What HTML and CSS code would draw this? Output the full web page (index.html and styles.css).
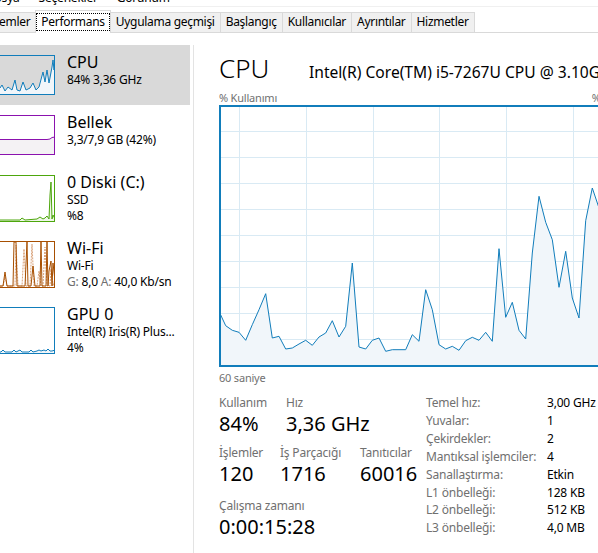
FILE: index.html
```
<!DOCTYPE html>
<html lang="tr">

<head>
    <meta charset="UTF-8">
    <meta name="viewport" content="width=device-width, initial-scale=1.0">
    <title>Görev Yöneticisi</title>
    <link rel="stylesheet" href="styles.css">
</head>

<body>

    <!-- Menu bar (only the bottom of it is in view) -->
    <div class="menubar">
        <div class="menubar-inner">
            <span class="menu-item first">Dosya</span>
            <span class="menu-item">Seçenekler</span>
            <span class="menu-item">Görünüm</span>
        </div>
    </div>

    <!-- Tabs -->
    <div class="tabs">
        <div class="tab first">İşlemler</div>
        <div class="tab active"><span class="focus">Performans</span></div>
        <div class="tab">Uygulama geçmişi</div>
        <div class="tab">Başlangıç</div>
        <div class="tab">Kullanıcılar</div>
        <div class="tab">Ayrıntılar</div>
        <div class="tab">Hizmetler</div>
    </div>

    <div class="main">

        <!-- Left list of resources -->
        <div class="sidebar">
            <div class="perf-item selected">
                <svg class="thumb" width="70" height="40" viewBox="0 0 70 40">
                    <polygon class="cpu-fill" points="0,32 4,30 8,34 12,31 15,33 17,30 20,36 23,32 27,35 30,25 32,35 35,36 38,27 41,35 45,33 48,28 51,35 54,32 58,17 60,27 62,15 64,28 67,12 68,5 69,15 70,7 70,40 0,40"></polygon>
                    <polyline class="cpu-line" points="0,32 4,30 8,34 12,31 15,33 17,30 20,36 23,32 27,35 30,25 32,35 35,36 38,27 41,35 45,33 48,28 51,35 54,32 58,17 60,27 62,15 64,28 67,12 68,5 69,15 70,7"></polyline>
                    <rect class="cpu-box" x="0.5" y="0.5" width="69" height="39"></rect>
                </svg>
                <div class="perf-text">
                    <div class="perf-title">CPU</div>
                    <div class="perf-sub">84% 3,36 GHz</div>
                </div>
            </div>

            <div class="perf-item">
                <svg class="thumb" width="70" height="40" viewBox="0 0 70 40">
                    <polygon class="mem-fill" points="0,24.5 62,24.5 65,24 67,22.5 70,22 70,40 0,40"></polygon>
                    <polyline class="mem-line" points="0,24.5 62,24.5 65,24 67,22.5 70,22"></polyline>
                    <rect class="mem-box" x="0.5" y="0.5" width="69" height="39"></rect>
                </svg>
                <div class="perf-text">
                    <div class="perf-title">Bellek</div>
                    <div class="perf-sub">3,3/7,9 GB (42%)</div>
                </div>
            </div>

            <div class="perf-item tall">
                <svg class="thumb" width="70" height="47" viewBox="0 0 70 47">
                    <polygon class="disk-fill" points="0,45 35,45 37,43 40,45 52,44 55,42 58,44 60,43 62,41 64,44 65,20 66,7 67,44 68,40 70,44 70,47 0,47"></polygon>
                    <polyline class="disk-line" points="0,45 35,45 37,43 40,45 52,44 55,42 58,44 60,43 62,41 64,44 65,20 66,7 67,44 68,40 70,44"></polyline>
                    <rect class="disk-box" x="0.5" y="0.5" width="69" height="46"></rect>
                </svg>
                <div class="perf-text">
                    <div class="perf-title">0 Diski (C:)</div>
                    <div class="perf-sub">SSD</div>
                    <div class="perf-sub">%8</div>
                </div>
            </div>

            <div class="perf-item tall">
                <svg class="thumb" width="70" height="47" viewBox="0 0 70 47">
                    <polyline class="net-dash" points="0,45 18,45 20,36 22,45 30,45 31,4 33,45 37,45 39,8 41,45 45,45 47,3 49,45 52,45 54,30 56,45 58,45 60,6 62,45 65,45 66,28 68,45 70,38"></polyline>
                    <polyline class="net-line" points="0,45 12,45 13,40 14,45 18,45 20,31 22,45 28,45 29,1 31,1 32,45 40,45 42,1 43,45 46,45 48,25 50,45 55,45 56,1 57,45 61,45 62,1 63,45 64,30 66,20 67,45 68,22 70,40"></polyline>
                    <rect class="net-box" x="0.5" y="0.5" width="69" height="46"></rect>
                </svg>
                <div class="perf-text">
                    <div class="perf-title">Wi-Fi</div>
                    <div class="perf-sub">Wi-Fi</div>
                    <div class="perf-sub"><span class="muted">G:</span> 8,0 <span class="muted">A:</span> 40,0 Kb/sn</div>
                </div>
            </div>

            <div class="perf-item tall">
                <svg class="thumb" width="70" height="47" viewBox="0 0 70 47">
                    <polygon class="cpu-fill" points="0,45 16,45 18,43 20,45 27,45 29,43 31,45 33,44 35,43 37,45 44,45 46,43 48,45 52,44 54,43 56,44 59,43 61,44 63,42 65,44 67,44 70,43 70,47 0,47"></polygon>
                    <polyline class="cpu-line" points="0,45 16,45 18,43 20,45 27,45 29,43 31,45 33,44 35,43 37,45 44,45 46,43 48,45 52,44 54,43 56,44 59,43 61,44 63,42 65,44 67,44 70,43"></polyline>
                    <rect class="cpu-box" x="0.5" y="0.5" width="69" height="46"></rect>
                </svg>
                <div class="perf-text">
                    <div class="perf-title">GPU 0</div>
                    <div class="perf-sub">Intel(R) Iris(R) Plus...</div>
                    <div class="perf-sub">4%</div>
                </div>
            </div>
        </div>

        <!-- CPU details -->
        <div class="detail">
            <div class="detail-header">
                <div class="detail-title">CPU</div>
                <div class="detail-model">Intel(R) Core(TM) i5-7267U CPU @ 3.10GHz</div>
            </div>

            <div class="chart-labels">
                <span>% Kullanımı</span>
                <span>%100</span>
            </div>

            <svg class="chart" width="400" height="262" viewBox="0 0 400 262">
                <g class="grid">
                    <line x1="0" y1="26.5" x2="400" y2="26.5"></line>
                    <line x1="0" y1="52.5" x2="400" y2="52.5"></line>
                    <line x1="0" y1="78.5" x2="400" y2="78.5"></line>
                    <line x1="0" y1="104.5" x2="400" y2="104.5"></line>
                    <line x1="0" y1="130.5" x2="400" y2="130.5"></line>
                    <line x1="0" y1="156.5" x2="400" y2="156.5"></line>
                    <line x1="0" y1="182.5" x2="400" y2="182.5"></line>
                    <line x1="0" y1="208.5" x2="400" y2="208.5"></line>
                    <line x1="0" y1="234.5" x2="400" y2="234.5"></line>
                    <line x1="20.5" y1="0" x2="20.5" y2="262"></line>
                    <line x1="87.5" y1="0" x2="87.5" y2="262"></line>
                    <line x1="154.5" y1="0" x2="154.5" y2="262"></line>
                    <line x1="220.5" y1="0" x2="220.5" y2="262"></line>
                    <line x1="287.5" y1="0" x2="287.5" y2="262"></line>
                    <line x1="354.5" y1="0" x2="354.5" y2="262"></line>
                </g>
                <polygon class="chart-fill" points="0,206.3 6.7,220.7 13.3,225.3 20,227.3 26.7,235.3 33.3,219.7 40,204.7 46.7,188.7 53.3,233 60,231.3 66.7,244 73.3,243 80,239 86.7,235.3 93.3,240.3 100,232 106.7,228 113.3,215.7 120,232 126.7,221.3 133.3,158 140,242 146.7,244 153.3,235.3 160,233 166.7,246.3 173.3,244.7 180,244.7 186.7,244.7 193.3,229.7 200,236.3 206.7,184.7 213.3,204.7 220,239.7 226.7,244 233.3,241.3 240,245.3 246.7,235.7 253.3,232.3 260,235.3 266.7,227.3 273.3,236.3 280,143.7 286.7,212.3 293.3,197.3 300,225.3 306.7,234 313.3,148 320,91.3 326.7,117.3 333.3,134.7 340,182.3 346.7,146.3 353.3,193 360,213 366.7,115.7 373.3,83 380,103 386.7,120 393.3,100 400,110 400,262 0,262"></polygon>
                <polyline class="chart-line" points="0,206.3 6.7,220.7 13.3,225.3 20,227.3 26.7,235.3 33.3,219.7 40,204.7 46.7,188.7 53.3,233 60,231.3 66.7,244 73.3,243 80,239 86.7,235.3 93.3,240.3 100,232 106.7,228 113.3,215.7 120,232 126.7,221.3 133.3,158 140,242 146.7,244 153.3,235.3 160,233 166.7,246.3 173.3,244.7 180,244.7 186.7,244.7 193.3,229.7 200,236.3 206.7,184.7 213.3,204.7 220,239.7 226.7,244 233.3,241.3 240,245.3 246.7,235.7 253.3,232.3 260,235.3 266.7,227.3 273.3,236.3 280,143.7 286.7,212.3 293.3,197.3 300,225.3 306.7,234 313.3,148 320,91.3 326.7,117.3 333.3,134.7 340,182.3 346.7,146.3 353.3,193 360,213 366.7,115.7 373.3,83 380,103 386.7,120 393.3,100 400,110"></polyline>
                <rect class="chart-box" x="1" y="1" width="398" height="260"></rect>
            </svg>

            <div class="chart-footer">60 saniye</div>

            <div class="stats">
                <div class="stats-left">
                    <div class="stat-row">
                        <div class="stat usage">
                            <div class="stat-label">Kullanım</div>
                            <div class="stat-value">84%</div>
                        </div>
                        <div class="stat">
                            <div class="stat-label">Hız</div>
                            <div class="stat-value">3,36 GHz</div>
                        </div>
                    </div>
                    <div class="stat-row">
                        <div class="stat processes">
                            <div class="stat-label">İşlemler</div>
                            <div class="stat-value">120</div>
                        </div>
                        <div class="stat threads">
                            <div class="stat-label">İş Parçacığı</div>
                            <div class="stat-value">1716</div>
                        </div>
                        <div class="stat">
                            <div class="stat-label">Tanıtıcılar</div>
                            <div class="stat-value">60016</div>
                        </div>
                    </div>
                    <div class="stat-row">
                        <div class="stat">
                            <div class="stat-label">Çalışma zamanı</div>
                            <div class="stat-value">0:00:15:28</div>
                        </div>
                    </div>
                </div>

                <div class="specs">
                    <span class="spec-label">Temel hız:</span><span>3,00 GHz</span>
                    <span class="spec-label">Yuvalar:</span><span>1</span>
                    <span class="spec-label">Çekirdekler:</span><span>2</span>
                    <span class="spec-label">Mantıksal işlemciler:</span><span>4</span>
                    <span class="spec-label">Sanallaştırma:</span><span>Etkin</span>
                    <span class="spec-label">L1 önbelleği:</span><span>128 KB</span>
                    <span class="spec-label">L2 önbelleği:</span><span>512 KB</span>
                    <span class="spec-label">L3 önbelleği:</span><span>4,0 MB</span>
                </div>
            </div>
        </div>
    </div>

</body>

</html>
```

FILE: styles.css
```
* {
    box-sizing: border-box;
}

body {
    margin: 0;
    width: 598px;
    height: 553px;
    overflow: hidden;
    background: #fff;
    color: #000;
    font-family: 'Segoe UI', 'Noto Sans', sans-serif;
    font-size: 12px;
    letter-spacing: -0.2px;
}

/* Menu bar */
.menubar {
    height: 7px;
    overflow: hidden;
    border-bottom: 1px solid #f0f0f0;
}

.menubar-inner {
    margin-top: -10px;
    line-height: 15px;
    white-space: nowrap;
}

.menu-item {
    margin-right: 16px;
}

.menu-item.first {
    margin-left: -14px;
}

/* Tabs */
.tabs {
    display: flex;
    align-items: flex-end;
    height: 26px;
    padding-top: 5px;
    border-bottom: 1px solid #d9d9d9;
    white-space: nowrap;
}

.tab {
    height: 20px;
    line-height: 18px;
    padding: 0 5px;
    margin-left: -1px;
    background: #f0f0f0;
    border: 1px solid #d9d9d9;
    border-bottom: none;
    letter-spacing: -0.3px;
}

.tab.first {
    margin-left: -19px;
}

.tab.active {
    position: relative;
    height: 23px;
    margin-bottom: -1px;
    padding: 2px 0 0;
    background: #fff;
    z-index: 1;
}

.tab.active .focus {
    display: block;
    height: 18px;
    line-height: 15px;
    padding: 0 4px;
    border: 1px dotted #000;
}

/* Layout */
.main {
    display: flex;
}

.sidebar {
    width: 194px;
    flex-shrink: 0;
    margin-top: 12px;
    border-right: 1px solid #e3e3e3;
    min-height: 520px;
}

.perf-item {
    display: flex;
    height: 60px;
    width: 190px;
    padding-top: 10px;
}

.perf-item.tall {
    height: 66px;
}

.perf-item.selected {
    background: #d9d9d9;
}

.thumb {
    margin-left: -15px;
    flex-shrink: 0;
}

.perf-text {
    margin-left: 12px;
    margin-top: -3px;
    white-space: nowrap;
}

.perf-title {
    font-size: 16px;
    line-height: 20px;
    letter-spacing: 0;
}

.perf-sub {
    line-height: 16px;
}

.muted {
    color: #707070;
}

/* Thumbnail colours */
.cpu-box { fill: none; stroke: #117dbb; }
.cpu-line { fill: none; stroke: #117dbb; stroke-width: 1; }
.cpu-fill { fill: #f1f6fa; }

.mem-box { fill: none; stroke: #8b12ae; }
.mem-line { fill: none; stroke: #8b12ae; stroke-width: 1; }
.mem-fill { fill: #f4f2f4; }

.disk-box { fill: none; stroke: #4da60c; }
.disk-line { fill: none; stroke: #4da60c; stroke-width: 1; }
.disk-fill { fill: #eff7e9; }

.net-box { fill: none; stroke: #a74f01; }
.net-line { fill: none; stroke: #a74f01; stroke-width: 1; }
.net-dash { fill: none; stroke: #d9a27a; stroke-width: 1; stroke-dasharray: 2 1; }

/* Detail panel */
.detail {
    width: 400px;
    flex-shrink: 0;
    margin-left: 25px;
    padding-top: 19px;
}

.detail-header {
    display: flex;
    justify-content: space-between;
    align-items: baseline;
    white-space: nowrap;
    letter-spacing: 0;
}

.detail-title {
    font-size: 26px;
    font-weight: 300;
    line-height: 32px;
}

.detail-model {
    font-size: 15.6px;
}

.chart-labels {
    display: flex;
    justify-content: space-between;
    margin-top: 7px;
    font-size: 11px;
    line-height: 14px;
    color: #707070;
}

.chart {
    display: block;
}

.grid line {
    stroke: #d9eaf4;
    stroke-width: 1;
}

.chart-fill {
    fill: #f1f6fa;
}

.chart-line {
    fill: none;
    stroke: #117dbb;
    stroke-width: 1;
}

.chart-box {
    fill: none;
    stroke: #117dbb;
    stroke-width: 2;
}

.chart-footer {
    margin-top: 4px;
    font-size: 11px;
    line-height: 14px;
    color: #707070;
}

/* Stats */
.stats {
    display: flex;
    align-items: flex-start;
    margin-top: 10px;
}

.stats-left {
    width: 207px;
}

.stat-row {
    display: flex;
    margin-bottom: 8px;
}

.stat-row:nth-child(2) {
    margin-bottom: 11px;
}

.stat {
    white-space: nowrap;
}

.stat.usage {
    width: 67px;
}

.stat.processes {
    width: 61px;
}

.stat.threads {
    width: 80px;
}

.stat-label {
    color: #707070;
    line-height: 16px;
}

.stat-value {
    font-size: 20px;
    line-height: 26px;
    letter-spacing: 0;
}

.specs {
    display: grid;
    grid-template-columns: 121px auto;
    margin-top: -1px;
    line-height: 17.9px;
    white-space: nowrap;
}

.spec-label {
    color: #707070;
}
```
